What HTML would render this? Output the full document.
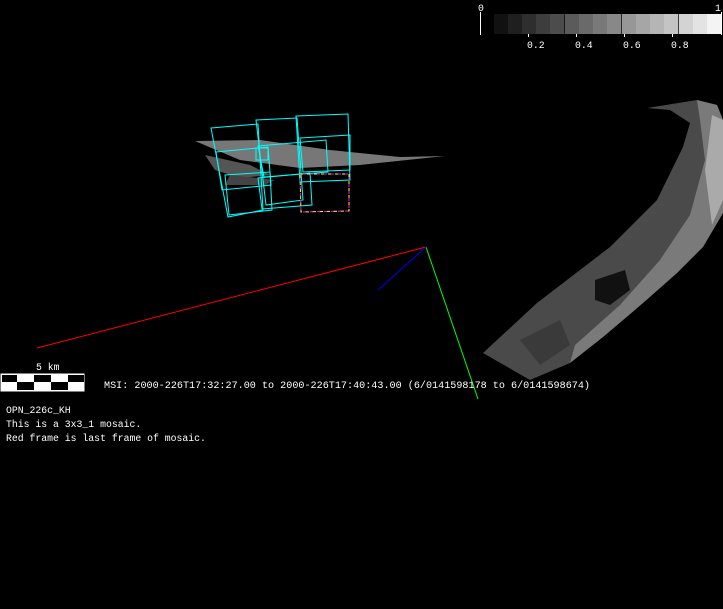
<!DOCTYPE html>
<html><head><meta charset="utf-8"><style>
html,body{margin:0;padding:0;background:#000;width:723px;height:609px;overflow:hidden}
svg{position:absolute;left:0;top:0}
text{font-family:"Liberation Mono","DejaVu Sans Mono",monospace;fill:#fff;font-size:9.8px}
</style></head><body>
<svg width="723" height="609" viewBox="0 0 723 609">
<rect width="723" height="609" fill="#000"/>
<g>
<rect x="494" y="14" width="14.3" height="20" fill="#111"/>
<rect x="508" y="14" width="14.3" height="20" fill="#1f1f1f"/>
<rect x="522" y="14" width="14.3" height="20" fill="#2e2e2e"/>
<rect x="536" y="14" width="14.3" height="20" fill="#3d3d3d"/>
<rect x="550" y="14" width="14.3" height="20" fill="#4c4c4c"/>
<rect x="565" y="14" width="14.3" height="20" fill="#5b5b5b"/>
<rect x="579" y="14" width="14.3" height="20" fill="#6a6a6a"/>
<rect x="593" y="14" width="14.3" height="20" fill="#797979"/>
<rect x="607" y="14" width="14.3" height="20" fill="#888"/>
<rect x="622" y="14" width="14.3" height="20" fill="#979797"/>
<rect x="636" y="14" width="14.3" height="20" fill="#a6a6a6"/>
<rect x="650" y="14" width="14.3" height="20" fill="#b5b5b5"/>
<rect x="664" y="14" width="14.3" height="20" fill="#c4c4c4"/>
<rect x="679" y="14" width="14.3" height="20" fill="#d3d3d3"/>
<rect x="693" y="14" width="14.3" height="20" fill="#e3e3e3"/>
<rect x="707" y="14" width="15" height="20" fill="#f4f4f4"/>
<line x1="480.5" y1="12" x2="480.5" y2="35" stroke="#fff"/>
<line x1="721.5" y1="12" x2="721.5" y2="35" stroke="#fff"/>
<line x1="528.5" y1="34" x2="528.5" y2="37" stroke="#fff"/>
<line x1="576.5" y1="34" x2="576.5" y2="37" stroke="#fff"/>
<line x1="624.5" y1="34" x2="624.5" y2="37" stroke="#fff"/>
<line x1="672.5" y1="34" x2="672.5" y2="37" stroke="#fff"/>
<text x="478" y="11">0</text><text x="715" y="11">1</text>
<text x="527" y="48">0.2</text><text x="575" y="48">0.4</text><text x="623" y="48">0.6</text><text x="671" y="48">0.8</text>
</g>
<g fill="#777">
<polygon points="195,141 260,140 330,150 400,157 445,156 360,165 300,168 240,160"/>
<polygon points="205,155 250,165 270,175 240,178 215,170" fill="#555"/>
<polygon points="230,175 275,180 265,185 225,185" fill="#444"/>
</g>
<g fill="none" stroke="#0ff" stroke-width="1">
<polygon points="211,128 258,124 263,210 228,217"/>
<polygon points="256,120 297,118 303,200 266,205"/>
<polygon points="296,116 348,114 350,180 300,182"/>
<polygon points="216,152 268,147 271,185 222,190"/>
<polygon points="258,146 326,140 328,172 264,177"/>
<polygon points="300,138 350,135 350,170 303,172"/>
<polygon points="225,175 270,172 272,210 229,215"/>
<polygon points="258,178 310,173 312,205 262,209"/>
<polygon points="256,148 268,148 268,160 256,160"/>
</g>
<polygon points="300,174 349,174 349,211 301,212" fill="none" stroke="#ff0" stroke-dasharray="4,3"/>
<polygon points="300,174 349,174 349,211 301,212" fill="none" stroke="#f0f" stroke-dasharray="3,4" stroke-dashoffset="4"/>
<line x1="37" y1="348" x2="426" y2="247" stroke="#f00"/>
<line x1="426" y1="247" x2="478" y2="399" stroke="#0f0"/>
<line x1="426" y1="247" x2="378" y2="290" stroke="#00f"/>
<polygon points="647,108 697,100 717,105 723,120 723,213 703,247 677,273 643,303 603,337 570,363 530,380 483,353 537,303 610,247 657,200 683,147 690,123 670,110" fill="#4a4a4a"/>
<polygon points="697,100 717,105 723,120 723,213 703,247 677,273 643,303 603,337 570,363 575,345 620,305 660,260 690,215 705,160 700,120" fill="#7a7a7a"/>
<polygon points="712,115 723,120 723,200 712,225 705,170" fill="#aaa"/>
<polygon points="595,280 625,270 630,290 610,305 595,300" fill="#111"/>
<polygon points="520,340 560,320 570,345 540,365" fill="#3a3a3a"/>
<rect x="0.5" y="373.5" width="84" height="18" fill="#fff"/>
<g fill="#000">
<rect x="2" y="375" width="15" height="7"/><rect x="34" y="375" width="17" height="7"/><rect x="68" y="375" width="16" height="7"/>
<rect x="17" y="382" width="17" height="8"/><rect x="51" y="382" width="17" height="8"/>
</g>
<text x="36" y="370">5 km</text>
<text x="104" y="388" textLength="486" lengthAdjust="spacingAndGlyphs">MSI:  2000-226T17:32:27.00 to 2000-226T17:40:43.00 (6/0141598178 to 6/0141598674)</text>
<text x="6" y="413">OPN_226c_KH</text>
<text x="6" y="427">This is a 3x3_1  mosaic.</text>
<text x="6" y="441">Red frame is last frame of mosaic.</text>
</svg>
</body></html>
